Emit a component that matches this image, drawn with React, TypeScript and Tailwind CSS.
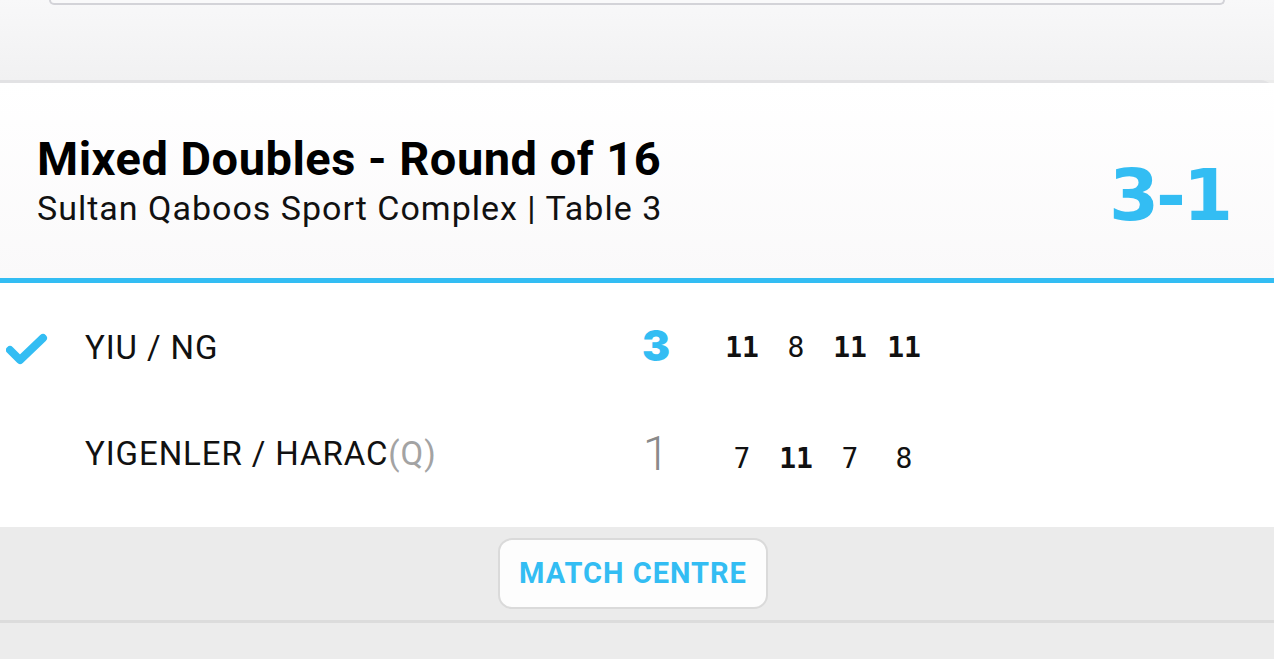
import React from "react";

const games = [
  { a: 11, b: 7 },
  { a: 8, b: 11 },
  { a: 11, b: 7 },
  { a: 11, b: 8 },
];

function Check() {
  return (
    <svg width="42" height="36" viewBox="0 0 42 36" fill="none">
      <path
        d="M4 20 L14 30 L37 8"
        stroke="#33bdf3"
        strokeWidth="8"
        strokeLinecap="round"
        strokeLinejoin="round"
      />
    </svg>
  );
}

function PlayerRow({
  name,
  qualifier,
  won,
  sets,
  side,
}: {
  name: string;
  qualifier?: string;
  won: boolean;
  sets: number;
  side: "a" | "b";
}) {
  return (
    <div className="flex h-[108px] items-center">
      <div className="flex w-[85px] items-center pl-[6px]">{won && <Check />}</div>
      <div className="w-[545px] font-['Roboto',sans-serif] text-[33px] tracking-[0.9px] text-[#111]">
        {name}
        {qualifier && <span className="text-[#a3a3a3]">{qualifier}</span>}
      </div>
      <div
        className={
          won
            ? "mb-[6px] w-[52px] text-center font-['Inter',sans-serif] text-[42px] font-black text-[#33bdf3]"
            : "w-[52px] text-center font-['Roboto',sans-serif] text-[48px] font-light text-[#8a8a8a]"
        }
      >
        {sets}
      </div>
      <div
        className={
          won
            ? "ml-[33px] flex font-['DejaVu_Sans_Mono',monospace] text-[28px] text-[#111]"
            : "ml-[33px] mt-[10px] flex font-['DejaVu_Sans_Mono',monospace] text-[28px] text-[#111]"
        }
      >
        {games.map((g, i) => {
          const mine = side === "a" ? g.a : g.b;
          const other = side === "a" ? g.b : g.a;
          return (
            <div
              key={i}
              className={mine > other ? "w-[54px] text-center font-bold" : "w-[54px] text-center"}
            >
              {mine}
            </div>
          );
        })}
      </div>
    </div>
  );
}

export default function App() {
  return (
    <div className="h-[659px] w-[1274px] overflow-hidden bg-[#ececec]">
      <div className="bg-gradient-to-b from-[#f8f8f9] to-[#f1f1f2]">
        <div className="mx-[49px] h-[5px] rounded-b-[12px] border-x-2 border-b-2 border-[#d3d3d8] bg-[#f9f9fa]" />
        <div className="h-[75px]" />
      </div>
      <div className="rounded-tr-[14px] border-t-[3px] border-[#e2e2e4] bg-white">
        <div className="flex h-[195px] items-center justify-between bg-gradient-to-b from-white to-[#faf9fa] pl-[37px] pr-[44px]">
          <div className="font-['Roboto',sans-serif] text-[#000]">
            <div className="text-[47px] font-bold leading-[50px] tracking-[0.5px]">Mixed Doubles - Round of 16</div>
            <div className="mt-[4px] text-[34px] leading-[40px] tracking-[1px] text-[#111]">
              Sultan Qaboos Sport Complex | Table 3
            </div>
          </div>
          <div className="pt-[28px] font-['DejaVu_Sans',sans-serif] text-[72px] font-bold leading-none tracking-[-3px] text-[#33bdf3]">
            3-1
          </div>
        </div>
        <div className="h-[5px] bg-[#33bdf3]" />
        <div className="pb-[19px] pt-[11px]">
          <PlayerRow name="YIU / NG" won sets={3} side="a" />
          <div className="-mt-[2px]">
            <PlayerRow name="YIGENLER / HARAC" qualifier="(Q)" won={false} sets={1} side="b" />
          </div>
        </div>
        <div className="flex h-[96px] items-center justify-center border-b-[3px] border-[#dcdcdc] bg-[#ebebeb] pr-[8px]">
          <button
            type="button"
            className="h-[71px] w-[270px] rounded-[14px] border-2 border-[#dadada] bg-[#fdfdfd] font-['Roboto',sans-serif] text-[29px] font-bold tracking-[1px] text-[#33bdf3]"
          >
            MATCH CENTRE
          </button>
        </div>
      </div>
    </div>
  );
}
